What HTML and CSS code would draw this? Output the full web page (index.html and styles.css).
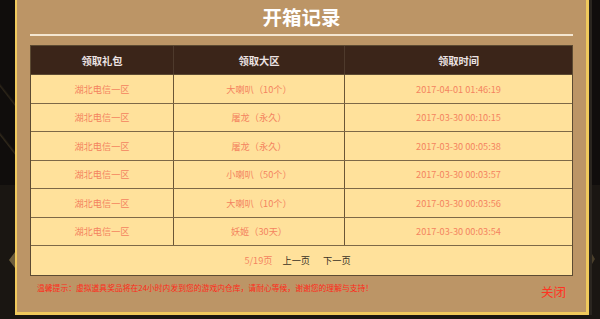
FILE: index.html
```html
<!DOCTYPE html>
<html lang="zh-CN">
<head>
<meta charset="utf-8">
<title>开箱记录</title>
<link rel="stylesheet" href="styles.css">
</head>
<body>
<div class="stage">
  <span class="arrow arrow-left"></span>
  <span class="arrow arrow-right"></span>
  <div class="modal">
    <h1 class="title">开箱记录</h1>
    <div class="table">
      <div class="row head">
        <div class="cell">领取礼包</div>
        <div class="cell">领取大区</div>
        <div class="cell">领取时间</div>
      </div>
      <div class="row">
        <div class="cell">湖北电信一区</div>
        <div class="cell">大喇叭（10个）</div>
        <div class="cell">2017-04-01 01:46:19</div>
      </div>
      <div class="row">
        <div class="cell">湖北电信一区</div>
        <div class="cell">屠龙（永久）</div>
        <div class="cell">2017-03-30 00:10:15</div>
      </div>
      <div class="row">
        <div class="cell">湖北电信一区</div>
        <div class="cell">屠龙（永久）</div>
        <div class="cell">2017-03-30 00:05:38</div>
      </div>
      <div class="row">
        <div class="cell">湖北电信一区</div>
        <div class="cell">小喇叭（50个）</div>
        <div class="cell">2017-03-30 00:03:57</div>
      </div>
      <div class="row">
        <div class="cell">湖北电信一区</div>
        <div class="cell">大喇叭（10个）</div>
        <div class="cell">2017-03-30 00:03:56</div>
      </div>
      <div class="row">
        <div class="cell">湖北电信一区</div>
        <div class="cell">妖姬（30天）</div>
        <div class="cell">2017-03-30 00:03:54</div>
      </div>
      <div class="pager">
        <span class="count">5/19页</span>
        <a class="page-link prev">上一页</a>
        <a class="page-link next">下一页</a>
      </div>
    </div>
    <div class="footer">
      <p class="tip">温馨提示：虚拟道具奖品将在24小时内发到您的游戏内仓库，请耐心等候，谢谢您的理解与支持！</p>
      <a class="close">关闭</a>
    </div>
  </div>
</div>
</body>
</html>
```
FILE: styles.css
```css
html, body {
  margin: 0;
  padding: 0;
}
body {
  width: 600px;
  height: 319px;
  overflow: hidden;
  background: linear-gradient(to bottom, #100d0c 0, #100d0c 185px, #1a1612 185px, #1a1612 100%);
  font-family: "Noto Sans CJK SC", "Liberation Sans", sans-serif;
}
.stage {
  position: relative;
  height: 319px;
  padding-left: 15px;
  background:
    linear-gradient(52deg, transparent 0, transparent 30px, rgba(110, 92, 55, 0.35) 31px, transparent 33px) 0 0 / 15px 185px no-repeat,
    linear-gradient(52deg, transparent 0, transparent 60px, rgba(110, 92, 55, 0.3) 61px, transparent 63px) 0 0 / 15px 185px no-repeat;
}
.arrow {
  position: absolute;
  width: 0;
  height: 0;
  border-top: 8px solid transparent;
  border-bottom: 8px solid transparent;
}
.arrow-left {
  left: 9px;
  top: 252px;
  border-right: 6px solid #6e5e3c;
}
.arrow-right {
  left: 592px;
  top: 254px;
  border-top-width: 5px;
  border-bottom-width: 5px;
  border-left: 3px solid #4a3f2a;
}
.modal {
  position: relative;
  width: 570px;
  height: 312px;
  box-sizing: content-box;
  background: #bc9566;
  border-left: 2px solid #f0c95c;
  border-right: 3px solid #f0c95c;
  border-bottom: 3px solid #f0c95c;
  box-shadow: 3px 0 0 #2b2620;
  padding: 0 13px;
  box-sizing: border-box;
  width: 574px;
  height: 315px;
}
.title {
  margin: 0;
  height: 34px;
  line-height: 33px;
  text-align: center;
  color: #ffffff;
  font-size: 19.5px;
  font-weight: bold;
  border-bottom: 2px solid #f4e6d1;
}
.table {
  margin-top: 9px;
  border: 1px solid #5c4a32;
  background: #ffe19b;
}
.row {
  display: grid;
  grid-template-columns: 143px 171px 1fr;
  height: 28.5px;
  box-sizing: border-box;
  border-bottom: 1px solid #7d6847;
}
.row .cell {
  display: flex;
  align-items: center;
  justify-content: center;
  border-right: 1px solid #6b5535;
  color: #f4845f;
  font-size: 9.2px;
  white-space: nowrap;
}
.row .cell:last-child {
  border-right: none;
}
.row.head {
  height: 29px;
  background: #3b2519;
  border-bottom: 1px solid #5c4a32;
}
.row.head .cell {
  color: #ebe2e2;
  font-size: 10.3px;
  font-weight: bold;
  border-right-color: #4e3a2c;
}
.pager {
  height: 28.5px;
  display: flex;
  align-items: center;
  justify-content: center;
  padding-right: 8px;
  font-size: 9.2px;
}
.count {
  color: #f4845f;
}
.page-link {
  color: #3a3226;
  cursor: pointer;
}
.prev {
  margin-left: 10px;
}
.next {
  margin-left: 13px;
}
.footer {
  display: flex;
  justify-content: space-between;
  align-items: flex-start;
  padding: 0 7px;
  margin-top: 6px;
}
.tip {
  margin: 0;
  color: #ff2a1a;
  font-size: 7.8px;
  line-height: 12px;
  white-space: nowrap;
}
.close {
  margin-top: 2px;
  color: #ff3322;
  font-size: 12.5px;
  line-height: 16px;
  cursor: pointer;
}
```
